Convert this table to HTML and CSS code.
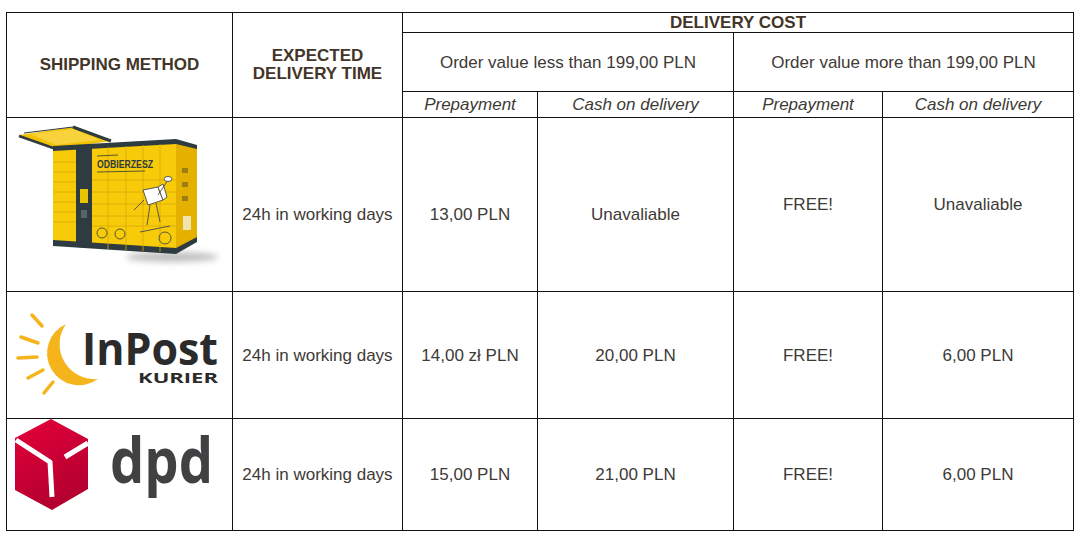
FILE: index.html
```html
<!DOCTYPE html>
<html lang="en">
<head>
<meta charset="utf-8">
<title>Shipping</title>
<link rel="stylesheet" href="styles.css">
</head>
<body>
<div class="page">
<table class="shipping">
  <colgroup>
    <col class="c-method"><col class="c-time"><col class="c-a"><col class="c-b"><col class="c-c"><col class="c-d">
  </colgroup>
  <thead>
    <tr class="r1">
      <th rowspan="3">SHIPPING METHOD</th>
      <th rowspan="3">EXPECTED<br>DELIVERY TIME</th>
      <th colspan="4">DELIVERY COST</th>
    </tr>
    <tr class="r2">
      <td colspan="2">Order value less than 199,00 PLN</td>
      <td colspan="2">Order value more than 199,00 PLN</td>
    </tr>
    <tr class="r3">
      <td class="pay">Prepayment</td>
      <td class="pay">Cash on delivery</td>
      <td class="pay">Prepayment</td>
      <td class="pay">Cash on delivery</td>
    </tr>
  </thead>
  <tbody>
    <tr class="r4">
      <td class="logo-cell">
        <svg class="logo" width="225" height="173" viewBox="7 118 225 173">
          <defs>
            <filter id="blur" x="-50%" y="-200%" width="200%" height="500%"><feGaussianBlur stdDeviation="3"/></filter>
          </defs>
          <ellipse cx="172" cy="257" rx="46" ry="5" fill="#bdbdbd" filter="url(#blur)"/>
          <!-- awning -->
          <polygon points="19,135 73,127 111,141 56,149" fill="#f2c200"/>
          <polygon points="30,134 73,129 100,140 56,145" fill="#f7d23a"/>
          <line x1="24" y1="133" x2="73" y2="127" stroke="#2e3b40" stroke-width="1"/>
          <line x1="19" y1="136" x2="56" y2="149" stroke="#2e3b40" stroke-width="2.5"/>
          <line x1="73" y1="127" x2="111" y2="141" stroke="#2e3b40" stroke-width="3"/>
          <!-- side face -->
          <polygon points="176,141 197,147 197,240 176,253" fill="#e4b100"/>
          <polygon points="176,139 197,145 197,149 176,144" fill="#2e3b40"/>
          <polygon points="176,248 197,237 197,242 176,254" fill="#2e3b40"/>
          <rect x="182" y="168" width="6" height="5" fill="#6b5a1a" opacity="0.6"/>
          <rect x="182" y="182" width="6" height="5" fill="#6b5a1a" opacity="0.6"/>
          <rect x="182" y="196" width="6" height="5" fill="#6b5a1a" opacity="0.6"/>
          <rect x="183" y="216" width="8" height="14" fill="#f4f0d8" opacity="0.8"/>
          <!-- front face -->
          <polygon points="53,148 176,141 176,253 53,244" fill="#f7ca0a"/>
          <polygon points="53,146 176,139 176,144 53,151" fill="#2e3b40"/>
          <polygon points="53,240 176,248 176,254 53,246" fill="#2e3b40"/>
          <g stroke="#d7a800" stroke-width="0.8">
            <line x1="54" y1="162" x2="76" y2="162"/>
            <line x1="54" y1="172" x2="76" y2="172"/>
            <line x1="54" y1="182" x2="76" y2="182"/>
            <line x1="54" y1="192" x2="76" y2="192"/>
            <line x1="54" y1="202" x2="76" y2="202"/>
            <line x1="54" y1="212" x2="76" y2="212"/>
            <line x1="54" y1="222" x2="76" y2="222"/>
            <line x1="108" y1="147" x2="108" y2="249"/>
            <line x1="126" y1="146" x2="126" y2="250"/>
            <line x1="143" y1="145" x2="143" y2="251"/>
            <line x1="160" y1="144" x2="160" y2="252"/>
            <line x1="92" y1="180" x2="176" y2="180"/>
            <line x1="92" y1="192" x2="176" y2="192"/>
            <line x1="92" y1="204" x2="176" y2="204"/>
            <line x1="92" y1="216" x2="176" y2="216"/>
            <line x1="92" y1="226" x2="176" y2="226"/>
          </g>
          <polygon points="76,149 92,148 92,248 76,247" fill="#2e3b40"/>
          <rect x="80" y="189" width="8" height="14" fill="#e9c400"/>
          <rect x="81" y="210" width="6" height="8" fill="#55656a"/>
          <line x1="97" y1="156" x2="118" y2="155" stroke="#2e3b40" stroke-width="0.8"/>
          <text x="97" y="168" class="locker-text" textLength="56" lengthAdjust="spacingAndGlyphs">ODBIERZESZ</text>
          <line x1="97" y1="172" x2="145" y2="171" stroke="#2e3b40" stroke-width="0.8"/>
          <!-- mascot -->
          <g stroke="#4a4a4a" stroke-width="0.9" fill="#ffffff">
            <polygon points="143,190 158,187 163,200 148,205"/>
            <polygon points="158,187 163,184 167,197 163,200"/>
            <line x1="158" y1="195" x2="168" y2="180" fill="none"/>
            <ellipse cx="168" cy="179" rx="4" ry="2.5"/>
            <line x1="144" y1="200" x2="134" y2="210" fill="none"/>
            <line x1="150" y1="205" x2="147" y2="225" fill="none"/>
            <line x1="156" y1="203" x2="160" y2="222" fill="none"/>
            <line x1="140" y1="232" x2="170" y2="226" fill="none"/>
          </g>
          <g fill="none" stroke="#2e3b40" stroke-width="0.8">
            <circle cx="102" cy="233" r="5"/>
            <circle cx="120" cy="234" r="5"/>
            <circle cx="165" cy="238" r="6"/>
          </g>
        </svg>
      </td>
      <td class="low">24h in working days</td>
      <td class="low">13,00 PLN</td>
      <td class="low">Unavaliable</td>
      <td>FREE!</td>
      <td>Unavaliable</td>
    </tr>
    <tr class="r5">
      <td class="logo-cell">
        <svg class="logo" width="225" height="126" viewBox="7 292 225 126">
          <g stroke="#f6b41c" stroke-width="3.5" stroke-linecap="round">
            <line x1="32" y1="315" x2="42" y2="326"/>
            <line x1="21" y1="337" x2="38" y2="343"/>
            <line x1="18" y1="358" x2="37" y2="357"/>
            <line x1="28" y1="378" x2="43" y2="370"/>
            <line x1="44" y1="393" x2="53" y2="382"/>
          </g>
          <path d="M66 324 A32 32 0 1 0 98 379 A35 35 0 0 1 66 324 Z" fill="#f6b41c"/>
          <text x="82" y="365" class="inpost" textLength="136" lengthAdjust="spacingAndGlyphs">InPost</text>
          <text x="138" y="383" class="kurier" textLength="80" lengthAdjust="spacingAndGlyphs">KURIER</text>
        </svg>
      </td>
      <td>24h in working days</td>
      <td>14,00 zł PLN</td>
      <td>20,00 PLN</td>
      <td>FREE!</td>
      <td>6,00 PLN</td>
    </tr>
    <tr class="r6">
      <td class="logo-cell">
        <svg class="logo" width="225" height="111" viewBox="7 419 225 111">
          <defs>
            <linearGradient id="dpdred" x1="0" y1="0" x2="0.4" y2="1">
              <stop offset="0" stop-color="#e4003a"/>
              <stop offset="1" stop-color="#b4002f"/>
            </linearGradient>
          </defs>
          <polygon points="51,419 88,439 88,489 52,510 15,490 15,438" fill="url(#dpdred)"/>
          <g stroke="#ffffff" stroke-width="5" fill="none">
            <polyline points="16,440 50,462 52,497" stroke-linejoin="round"/>
            <line x1="65" y1="457" x2="88" y2="443"/>
          </g>
          <text x="110" y="483" class="dpd" textLength="103" lengthAdjust="spacingAndGlyphs">dpd</text>
        </svg>
      </td>
      <td>24h in working days</td>
      <td>15,00 PLN</td>
      <td>21,00 PLN</td>
      <td>FREE!</td>
      <td>6,00 PLN</td>
    </tr>
  </tbody>
</table>
</div>
</body>
</html>
```

FILE: styles.css
```css
html, body {
  margin: 0;
  background: #ffffff;
}

body {
  font-family: "Liberation Sans", Arial, sans-serif;
}

.page {
  padding: 12px 0 0 6px;
}

.shipping {
  border-collapse: collapse;
  table-layout: fixed;
  width: 1068px;
  font-size: 17px;
  color: #3e3a36;
}

.c-method { width: 226px; }
.c-time { width: 170px; }
.c-a { width: 135px; }
.c-b { width: 196px; }
.c-c { width: 149px; }
.c-d { width: 191px; }

.shipping th,
.shipping td {
  border: 1px solid #111111;
  padding: 0;
  text-align: center;
  vertical-align: middle;
  line-height: 19px;
}

.shipping th {
  font-weight: bold;
  color: #433528;
  line-height: 18px;
}

.r1 { height: 20px; }
.r2 { height: 59px; }
.r3 { height: 26px; }
.r4 { height: 174px; }
.r5 { height: 127px; }
.r6 { height: 112px; }

.pay {
  font-style: italic;
}

.shipping td.low {
  padding-top: 20px;
}

.shipping td.logo-cell {
  line-height: 0;
}

.logo {
  display: block;
}

.locker-text {
  font-family: "Liberation Sans", Arial, sans-serif;
  font-weight: bold;
  font-size: 11px;
  fill: #2e3b40;
}

.inpost {
  font-family: "Open Sans", "Liberation Sans", sans-serif;
  font-weight: 700;
  font-size: 44px;
  fill: #2b2b2b;
}

.kurier {
  font-family: "Open Sans", "Liberation Sans", sans-serif;
  font-weight: 700;
  font-size: 14px;
  fill: #2b2b2b;
}

.dpd {
  font-family: "Open Sans", "Liberation Sans", sans-serif;
  font-weight: 700;
  font-size: 62px;
  fill: #414042;
}
```
